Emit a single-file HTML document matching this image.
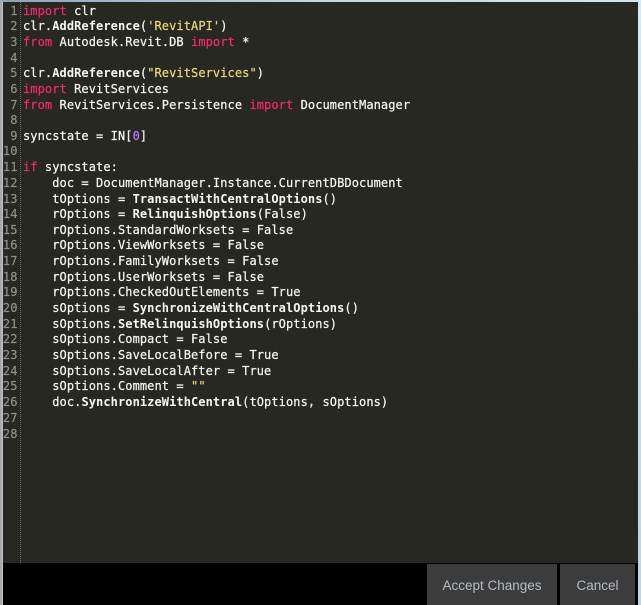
<!DOCTYPE html>
<html>
<head>
<meta charset="utf-8">
<style>
html,body{margin:0;padding:0;background:#000;}
#w{position:relative;width:641px;height:605px;overflow:hidden;background:#000;}
#edge{position:absolute;left:0;top:0;width:641px;height:605px;background:#b9c6d2;}
#top{position:absolute;left:0;top:0;width:641px;height:2px;background:linear-gradient(90deg,#8fa3b5,#c9d5df 50%,#d5e4ee);}
#right{position:absolute;left:638px;top:0;width:3px;height:605px;background:linear-gradient(180deg,#d8e8f0,#c5d2dc);}
#left{position:absolute;left:0;top:0;width:2px;height:605px;background:#a9a9a9;}
#ed{position:absolute;left:3px;top:2px;width:635px;height:561px;background:#272822;}
#blk{position:absolute;left:3px;top:563px;width:635px;height:42px;background:#000;}
#gut{position:absolute;left:20px;top:2px;width:0;height:561px;border-left:1px dotted #6d6d66;}
.l{position:absolute;left:23px;white-space:pre;font:12px/16px "DejaVu Sans Mono","Liberation Mono",monospace;letter-spacing:.08px;color:#f8f8f2;height:16px;-webkit-text-stroke:.2px;}
.n{position:absolute;width:17.5px;left:0;text-align:right;white-space:pre;font:12px/16px "DejaVu Sans Mono","Liberation Mono",monospace;letter-spacing:.08px;color:#8f908a;height:16px;-webkit-text-stroke:.2px;}
.k{color:#f92672;}
.s{color:#e6db74;}
.d{color:#ae81ff;}
b{font-weight:bold;color:#f8f8f2;-webkit-text-stroke:0;}
.btn{position:absolute;top:564px;height:41px;background:#3c3c3c;color:#b5bcc4;font:13.5px/43px "Liberation Sans",Arial,sans-serif;text-align:center;}
</style>
</head>
<body>
<div id="w">
<div id="edge"></div>
<div id="top"></div>
<div id="right"></div>
<div id="left"></div>
<div id="ed"></div>
<div id="blk"></div>
<div id="gut"></div>

<div class="n" style="top:3px">1</div>
<div class="n" style="top:18px">2</div>
<div class="n" style="top:34px">3</div>
<div class="n" style="top:50px">4</div>
<div class="n" style="top:65px">5</div>
<div class="n" style="top:81px">6</div>
<div class="n" style="top:97px">7</div>
<div class="n" style="top:112px">8</div>
<div class="n" style="top:128px">9</div>
<div class="n" style="top:143px">10</div>
<div class="n" style="top:159px">11</div>
<div class="n" style="top:175px">12</div>
<div class="n" style="top:191px">13</div>
<div class="n" style="top:206px">14</div>
<div class="n" style="top:222px">15</div>
<div class="n" style="top:237px">16</div>
<div class="n" style="top:253px">17</div>
<div class="n" style="top:269px">18</div>
<div class="n" style="top:284px">19</div>
<div class="n" style="top:300px">20</div>
<div class="n" style="top:316px">21</div>
<div class="n" style="top:331px">22</div>
<div class="n" style="top:347px">23</div>
<div class="n" style="top:363px">24</div>
<div class="n" style="top:378px">25</div>
<div class="n" style="top:394px">26</div>
<div class="n" style="top:410px">27</div>
<div class="n" style="top:426px">28</div>

<div class="l" style="top:3px"><span class="k">import</span> clr</div>
<div class="l" style="top:18px">clr.<b>AddReference</b>(<span class="s">'RevitAPI'</span>)</div>
<div class="l" style="top:34px"><span class="k">from</span> Autodesk.Revit.DB <span class="k">import</span> *</div>
<div class="l" style="top:65px">clr.<b>AddReference</b>(<span class="s">"RevitServices"</span>)</div>
<div class="l" style="top:81px"><span class="k">import</span> RevitServices</div>
<div class="l" style="top:97px"><span class="k">from</span> RevitServices.Persistence <span class="k">import</span> DocumentManager</div>
<div class="l" style="top:128px">syncstate = IN[<span class="d">0</span>]</div>
<div class="l" style="top:159px"><span class="k">if</span> syncstate:</div>
<div class="l" style="top:175px">    doc = DocumentManager.Instance.CurrentDBDocument</div>
<div class="l" style="top:191px">    tOptions = <b>TransactWithCentralOptions</b>()</div>
<div class="l" style="top:206px">    rOptions = <b>RelinquishOptions</b>(False)</div>
<div class="l" style="top:222px">    rOptions.StandardWorksets = False</div>
<div class="l" style="top:237px">    rOptions.ViewWorksets = False</div>
<div class="l" style="top:253px">    rOptions.FamilyWorksets = False</div>
<div class="l" style="top:269px">    rOptions.UserWorksets = False</div>
<div class="l" style="top:284px">    rOptions.CheckedOutElements = True</div>
<div class="l" style="top:300px">    sOptions = <b>SynchronizeWithCentralOptions</b>()</div>
<div class="l" style="top:316px">    sOptions.<b>SetRelinquishOptions</b>(rOptions)</div>
<div class="l" style="top:331px">    sOptions.Compact = False</div>
<div class="l" style="top:347px">    sOptions.SaveLocalBefore = True</div>
<div class="l" style="top:363px">    sOptions.SaveLocalAfter = True</div>
<div class="l" style="top:378px">    sOptions.Comment = <span class="s">""</span></div>
<div class="l" style="top:394px">    doc.<b>SynchronizeWithCentral</b>(tOptions, sOptions)</div>

<div class="btn" style="left:427px;width:130px">Accept Changes</div>
<div class="btn" style="left:560px;width:75px">Cancel</div>
</div>
</body>
</html>
